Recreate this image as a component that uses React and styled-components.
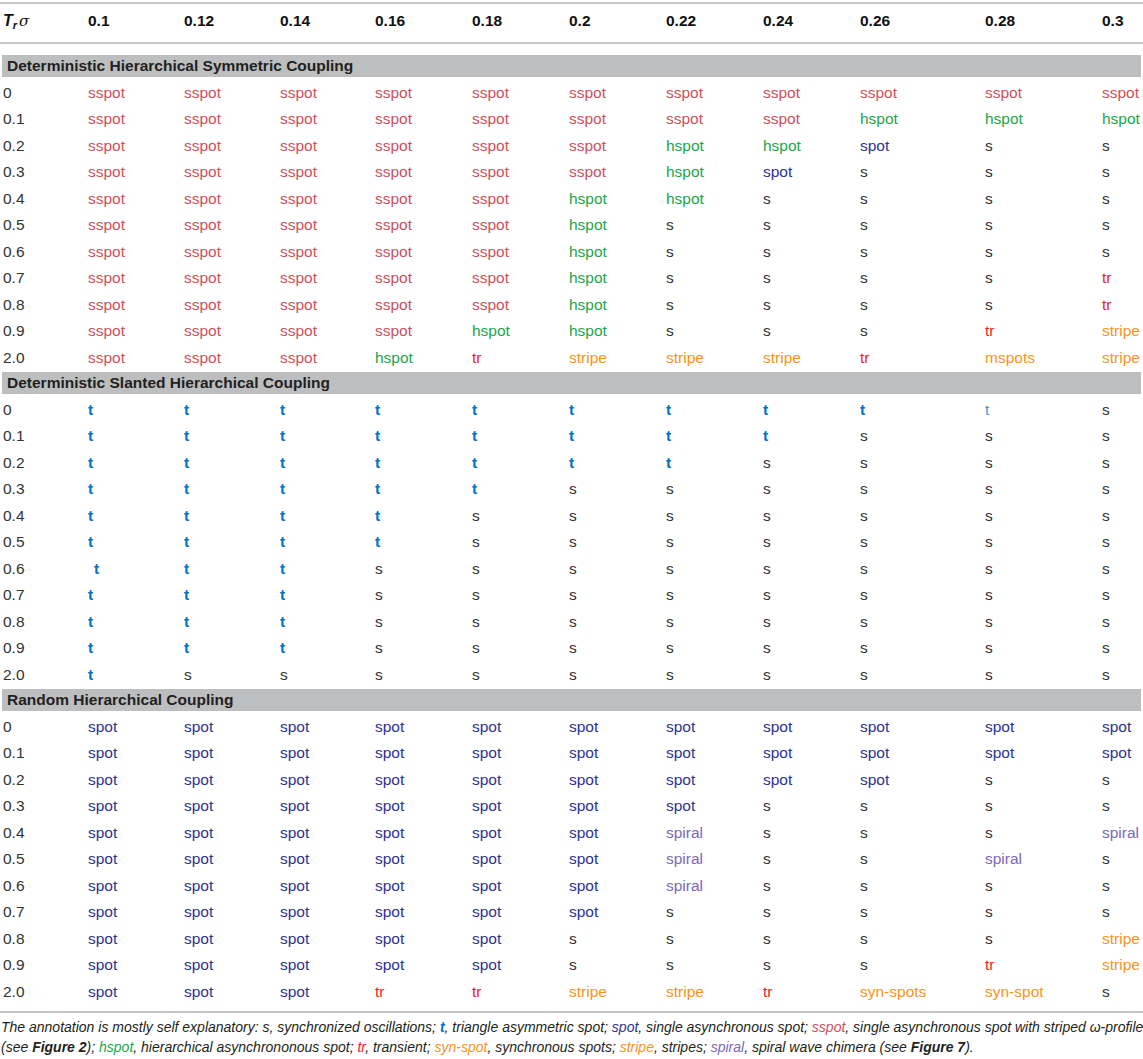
import React from "react";
import styled, { createGlobalStyle } from "styled-components";

const Global = createGlobalStyle`
  * { box-sizing: border-box; }
  body {
    margin: 0;
    background: #ffffff;
    font-family: "Liberation Sans", Arial, sans-serif;
    color: #231f20;
  }
`;

const colors = {
  sspot: "#cd505c",
  hspot: "#1aa64a",
  spot: "#2e3192",
  t: "#0072c6",
  tl: "#3d9bdc",
  tr: "#ee1c25",
  stripe: "#f7931e",
  mspots: "#f7931e",
  "syn-spots": "#f7931e",
  "syn-spot": "#f7931e",
  spiral: "#7c68b8",
  s: "#333333",
};

const COLS = "88px 96px 96px 95px 97px 97px 97px 97px 97px 125px 117px 1fr";

const Table = styled.div`
  width: 1143px;
  padding-top: 2px;
`;

const HeaderRow = styled.div`
  display: grid;
  grid-template-columns: ${COLS};
  align-items: center;
  height: 42px;
  padding-bottom: 4px;
  border-top: 2px solid #c6c6c6;
  border-bottom: 2px solid #c6c6c6;
  font-weight: bold;
  font-size: 15.5px;
  color: #111;
`;

const HeadCell = styled.div`
  padding-left: ${(p) => (p.$first ? "3px" : "0")};
  white-space: nowrap;
  font-style: ${(p) => (p.$first ? "italic" : "normal")};
  font-size: ${(p) => (p.$first ? "16px" : "inherit")};

  sub {
    font-size: 11px;
    vertical-align: -3px;
    line-height: 0;
  }
`;

const Sigma = styled.span`
  font-weight: normal;
  font-family: "DejaVu Serif", "Liberation Serif", serif;
  font-size: 15px;
  margin-left: 2px;
`;

const Section = styled.section`
  margin-top: ${(p) => (p.$first ? "11px" : "1.5px")};
`;

const Band = styled.div`
  height: 22px;
  margin: 0 2px;
  padding-left: 5px;
  display: flex;
  align-items: center;
  background: #bcbec0;
  font-weight: bold;
  font-size: 15.5px;
  color: #231f20;
`;

const Rows = styled.div`
  padding-top: 2px;
`;

const Row = styled.div`
  display: grid;
  grid-template-columns: ${COLS};
  align-items: center;
  height: 26.5px;
  font-size: 15.5px;
  line-height: 1;
`;

const Label = styled.div`
  padding-left: 3px;
  color: #333;
`;

const Cell = styled.div`
  white-space: nowrap;
  color: ${(p) => colors[p.$kind] || "#333"};
  font-weight: ${(p) => (p.$kind === "t" ? "bold" : "normal")};
  padding-left: ${(p) => (p.$shift ? "6px" : "0")};
`;

const Footnote = styled.p`
  margin: 6px 0 0;
  padding: 4px 0 0 1px;
  border-top: 2px solid #c6c6c6;
  font-style: italic;
  font-size: 14px;
  line-height: 20px;
  color: #231f20;
  white-space: nowrap;
`;

const Term = styled.span`
  color: ${(p) => colors[p.$kind]};
  font-weight: ${(p) => (p.$kind === "t" ? "bold" : "normal")};
`;

const Ref = styled.b`
  font-style: italic;
`;

const heads = ["0.1", "0.12", "0.14", "0.16", "0.18", "0.2", "0.22", "0.24", "0.26", "0.28", "0.3"];
const labels = ["0", "0.1", "0.2", "0.3", "0.4", "0.5", "0.6", "0.7", "0.8", "0.9", "2.0"];

const rep = (w, n) => Array(n).fill(w);

const sections = [
  {
    title: "Deterministic Hierarchical Symmetric Coupling",
    rows: [
      rep("sspot", 11),
      [...rep("sspot", 8), ...rep("hspot", 3)],
      [...rep("sspot", 6), "hspot", "hspot", "spot", "s", "s"],
      [...rep("sspot", 6), "hspot", "spot", "s", "s", "s"],
      [...rep("sspot", 5), "hspot", "hspot", "s", "s", "s", "s"],
      [...rep("sspot", 5), "hspot", ...rep("s", 5)],
      [...rep("sspot", 5), "hspot", ...rep("s", 5)],
      [...rep("sspot", 5), "hspot", ...rep("s", 4), "tr"],
      [...rep("sspot", 5), "hspot", ...rep("s", 4), "tr"],
      [...rep("sspot", 4), "hspot", "hspot", "s", "s", "s", "tr", "stripe"],
      [...rep("sspot", 3), "hspot", "tr", "stripe", "stripe", "stripe", "tr", "mspots", "stripe"],
    ],
  },
  {
    title: "Deterministic Slanted Hierarchical Coupling",
    rows: [
      [...rep("t", 9), "tl", "s"],
      [...rep("t", 8), ...rep("s", 3)],
      [...rep("t", 7), ...rep("s", 4)],
      [...rep("t", 5), ...rep("s", 6)],
      [...rep("t", 4), ...rep("s", 7)],
      [...rep("t", 4), ...rep("s", 7)],
      ["t>", "t", "t", ...rep("s", 8)],
      [...rep("t", 3), ...rep("s", 8)],
      [...rep("t", 3), ...rep("s", 8)],
      [...rep("t", 3), ...rep("s", 8)],
      ["t", ...rep("s", 10)],
    ],
  },
  {
    title: "Random Hierarchical Coupling",
    rows: [
      rep("spot", 11),
      rep("spot", 11),
      [...rep("spot", 9), "s", "s"],
      [...rep("spot", 7), ...rep("s", 4)],
      [...rep("spot", 6), "spiral", "s", "s", "s", "spiral"],
      [...rep("spot", 6), "spiral", "s", "s", "spiral", "s"],
      [...rep("spot", 6), "spiral", ...rep("s", 4)],
      [...rep("spot", 6), ...rep("s", 5)],
      [...rep("spot", 5), ...rep("s", 5), "stripe"],
      [...rep("spot", 5), ...rep("s", 4), "tr", "stripe"],
      [...rep("spot", 3), "tr", "tr", "stripe", "stripe", "tr", "syn-spots", "syn-spot", "s"],
    ],
  },
];

function DataCell({ word }) {
  if (word === "tl") return <Cell $kind="tl">t</Cell>;
  if (word === "t>") return <Cell $kind="t" $shift>t</Cell>;
  return <Cell $kind={word}>{word}</Cell>;
}

export default function App() {
  return (
    <>
      <Global />
      <Table>
        <HeaderRow>
          <HeadCell $first>
            T<sub>r</sub>
            <Sigma>σ</Sigma>
          </HeadCell>
          {heads.map((h) => (
            <HeadCell key={h}>{h}</HeadCell>
          ))}
        </HeaderRow>

        {sections.map((sec, si) => (
          <Section key={sec.title} $first={si === 0}>
            <Band>{sec.title}</Band>
            <Rows>
              {sec.rows.map((row, ri) => (
                <Row key={ri}>
                  <Label>{labels[ri]}</Label>
                  {row.map((w, ci) => (
                    <DataCell key={ci} word={w} />
                  ))}
                </Row>
              ))}
            </Rows>
          </Section>
        ))}

        <Footnote>
          The annotation is mostly self explanatory: s, synchronized oscillations; <Term $kind="t">t</Term>, triangle
          asymmetric spot; <Term $kind="spot">spot</Term>, single asynchronous spot; <Term $kind="sspot">sspot</Term>,
          single asynchronous spot with striped ω-profile
          <br />
          (see <Ref>Figure 2</Ref>); <Term $kind="hspot">hspot</Term>, hierarchical asynchrononous spot;{" "}
          <Term $kind="tr">tr</Term>, transient; <Term $kind="syn-spot">syn-spot</Term>, synchronous spots;{" "}
          <Term $kind="stripe">stripe</Term>, stripes; <Term $kind="spiral">spiral</Term>, spiral wave chimera (see{" "}
          <Ref>Figure 7</Ref>).
        </Footnote>
      </Table>
    </>
  );
}
